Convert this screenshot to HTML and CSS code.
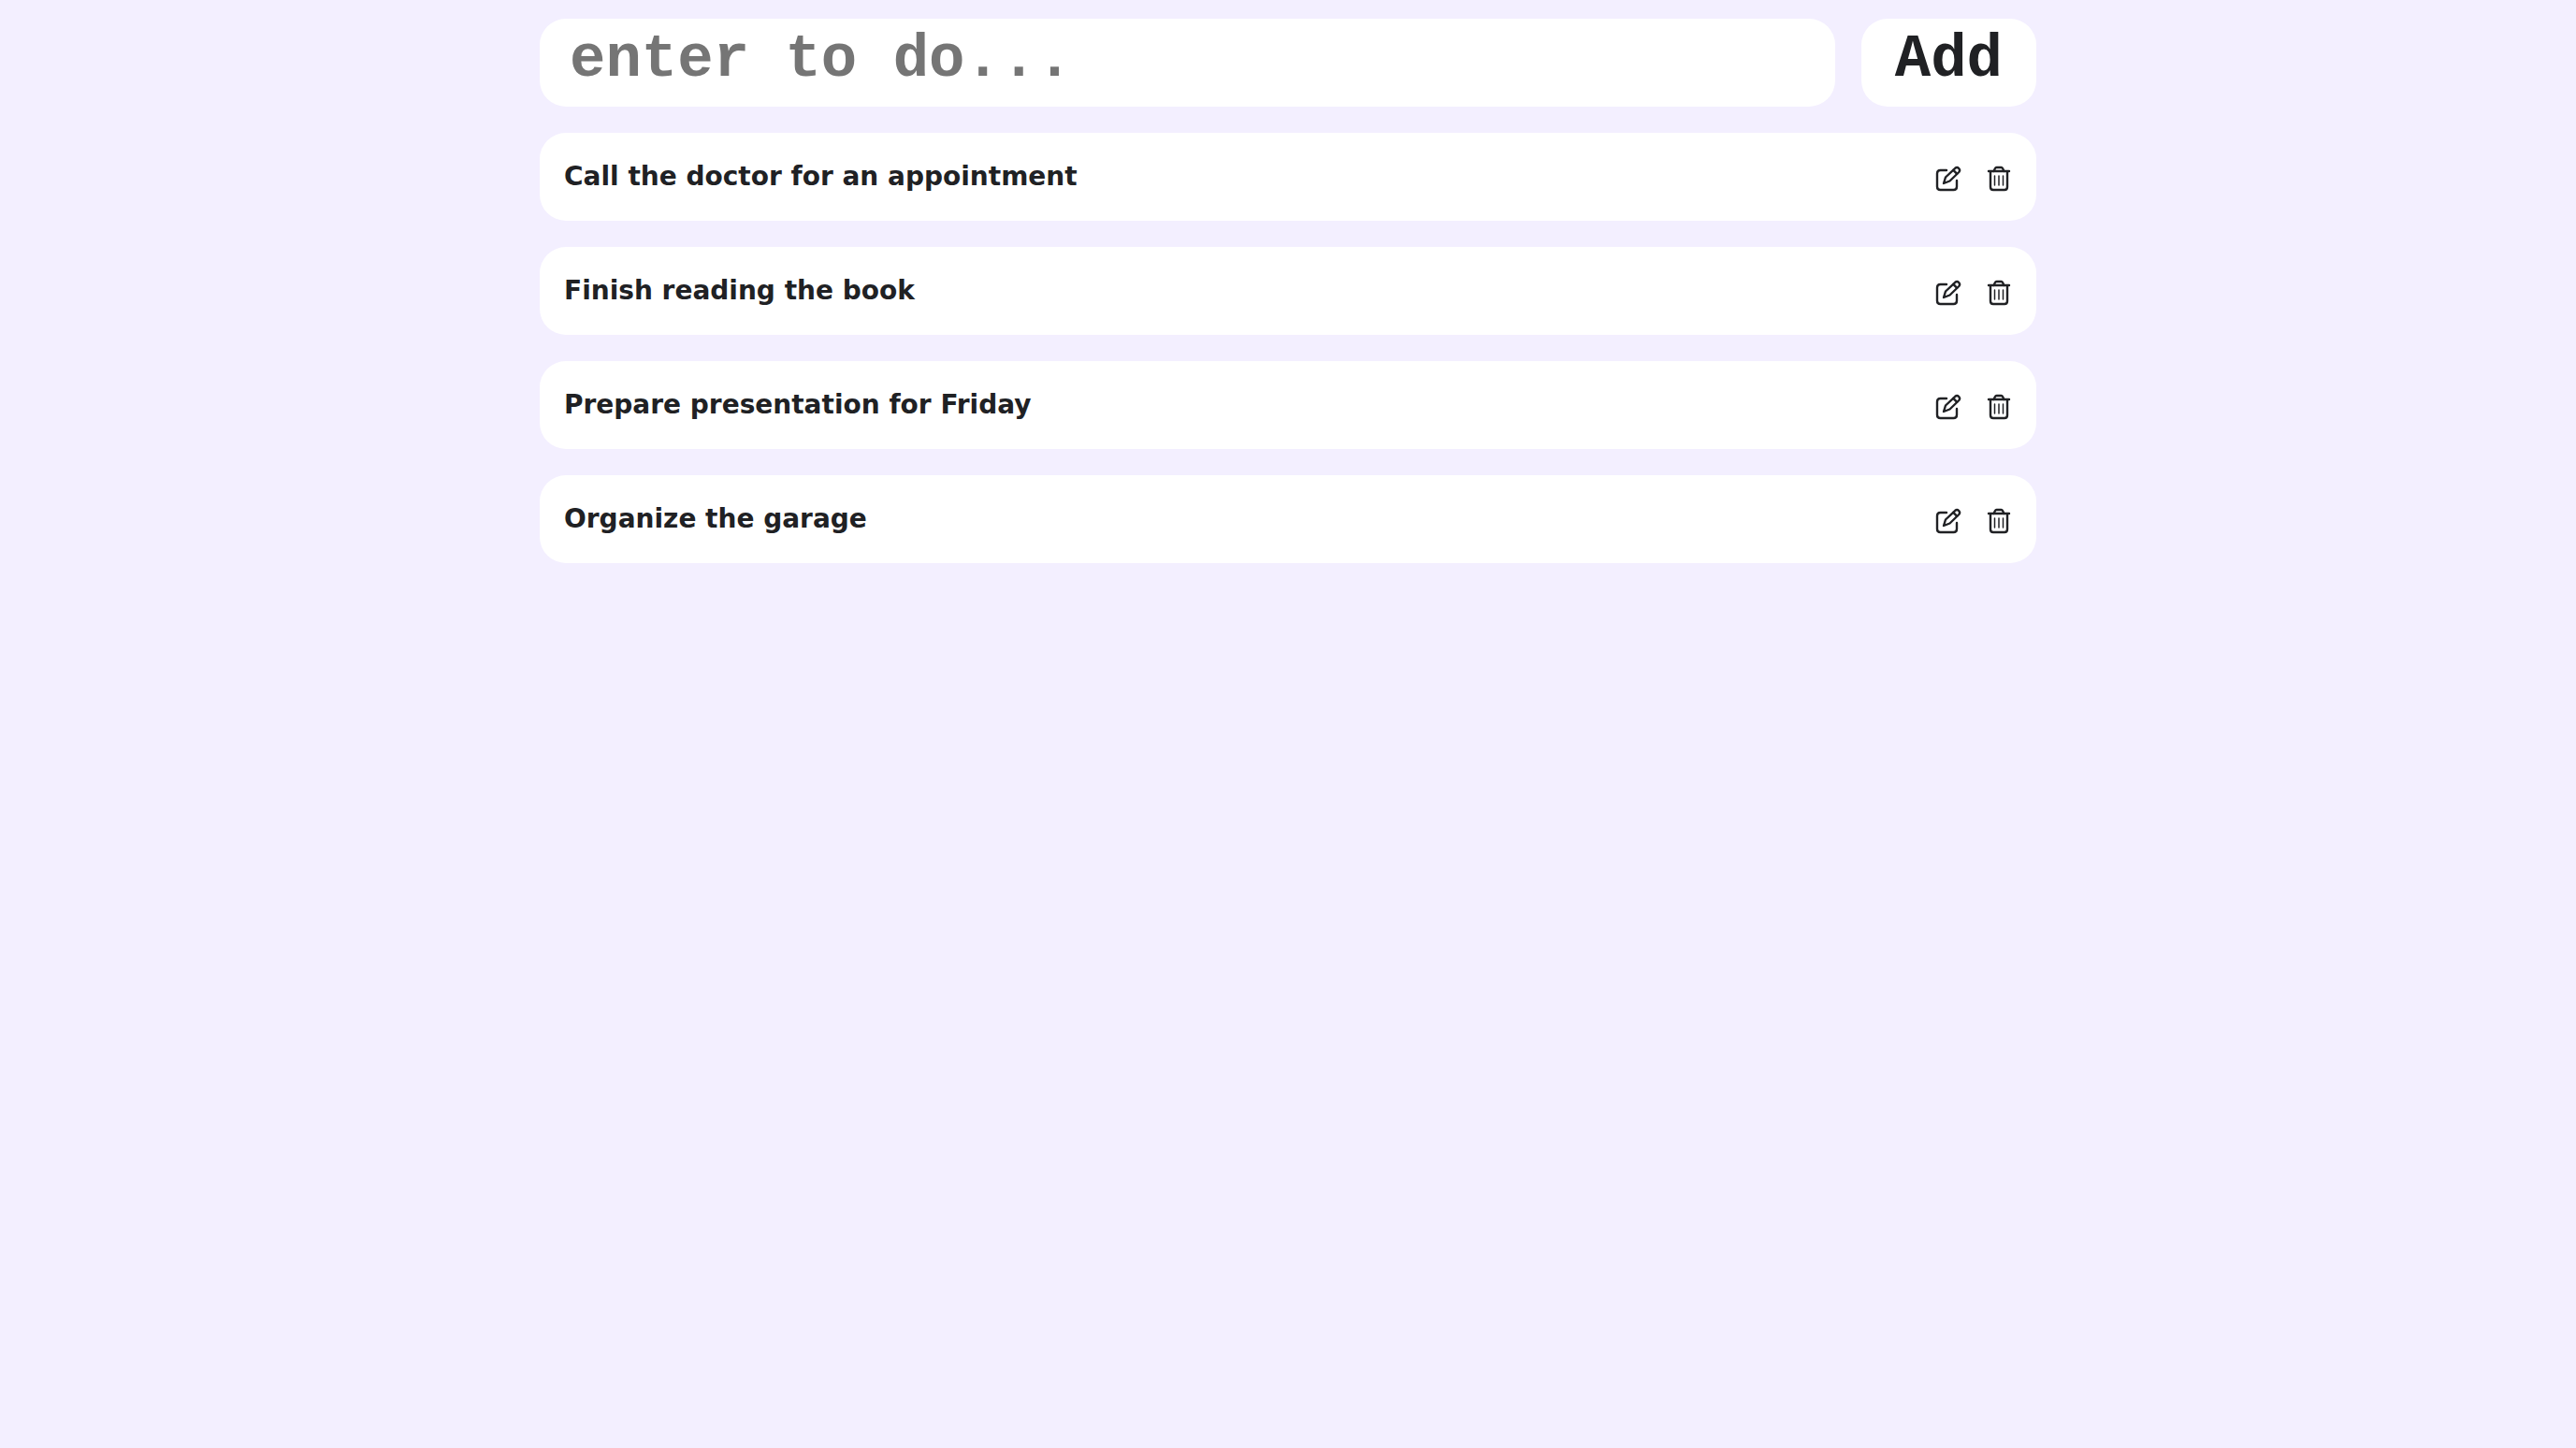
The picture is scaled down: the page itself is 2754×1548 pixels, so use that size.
FILE: index.html
```
<!DOCTYPE html>
<html lang="en">
<head>
<meta charset="utf-8">
<meta name="viewport" content="width=device-width, initial-scale=1">
<title>To do</title>
<link rel="stylesheet" href="styles.css">
</head>
<body>
<svg class="sprite" aria-hidden="true">
  <symbol id="edit" viewBox="0 0 28 28">
    <path d="M12 5H5.500Q2 5 2 8.500V22.500Q2 26 5.500 26H19.500Q23 26 23 22.500V16"/>
    <path d="M9 19L11 12.500L21.300 2.800Q23.300 1.200 25.200 3.100Q27 5 25.300 7L15.500 16.500Z"/>
    <path d="M19.300 4.800L23.200 8.800"/>
  </symbol>
  <symbol id="trash" viewBox="0 0 28 28">
    <path d="M3 6H25M5 6V23Q5 26 8 26H20Q23 26 23 23V6"/>
    <path d="M8.500 6L10 3Q10.500 2 11.500 2H16.500Q17.500 2 18 3L19.500 6"/>
    <path class="thin" d="M9.500 11V21M14 11V21M18.500 11V21"/>
  </symbol>
</svg>
<main class="app">
  <form class="entry">
    <input class="entry-input" type="text" aria-label="New to do" placeholder="enter to do...">
    <button class="entry-add" type="button">Add</button>
  </form>
  <ul class="list">
    <li class="item">
      <span class="item-text">Call the doctor for an appointment</span>
      <button class="icon-button" type="button" aria-label="Edit"><svg class="icon"><use href="#edit"/></svg></button>
      <button class="icon-button" type="button" aria-label="Delete"><svg class="icon"><use href="#trash"/></svg></button>
    </li>
    <li class="item">
      <span class="item-text">Finish reading the book</span>
      <button class="icon-button" type="button" aria-label="Edit"><svg class="icon"><use href="#edit"/></svg></button>
      <button class="icon-button" type="button" aria-label="Delete"><svg class="icon"><use href="#trash"/></svg></button>
    </li>
    <li class="item">
      <span class="item-text">Prepare presentation for Friday</span>
      <button class="icon-button" type="button" aria-label="Edit"><svg class="icon"><use href="#edit"/></svg></button>
      <button class="icon-button" type="button" aria-label="Delete"><svg class="icon"><use href="#trash"/></svg></button>
    </li>
    <li class="item">
      <span class="item-text">Organize the garage</span>
      <button class="icon-button" type="button" aria-label="Edit"><svg class="icon"><use href="#edit"/></svg></button>
      <button class="icon-button" type="button" aria-label="Delete"><svg class="icon"><use href="#trash"/></svg></button>
    </li>
  </ul>
</main>
</body>
</html>
```
FILE: styles.css
```
* {
  box-sizing: border-box;
}

body {
  margin: 0;
  background: #f3efff;
  color: #202124;
  font-family: "DejaVu Sans", sans-serif;
}

.sprite {
  display: none;
}

.app {
  max-width: 1600px;
  margin: 0 auto;
  padding: 20px 0;
  display: flex;
  flex-direction: column;
  gap: 28px;
}

.entry {
  display: flex;
  gap: 28px;
}

.entry-input,
.entry-add {
  border: 0;
  border-radius: 28px;
  background: #fff;
  color: inherit;
  font: bold 64px/80px "Liberation Mono", monospace;
  padding: 4px 36px 10px;
}

.entry-input {
  flex: 1;
  min-width: 0;
  padding-left: 32px;
}

.entry-input::placeholder {
  color: #757575;
  opacity: 1;
}

.list {
  list-style: none;
  margin: 0;
  padding: 0;
  display: flex;
  flex-direction: column;
  gap: 28px;
}

.item {
  display: flex;
  align-items: center;
  gap: 26px;
  min-height: 94px;
  padding: 8px 26px 8px 26px;
  border-radius: 28px;
  background: #fff;
}

.item-text {
  flex: 1;
  font-size: 28px;
  font-weight: bold;
  line-height: 40px;
}

.icon-button {
  display: flex;
  padding: 4px 0 0;
  border: 0;
  background: none;
  color: inherit;
}

.icon {
  width: 28px;
  height: 28px;
  fill: none;
  stroke: currentColor;
  stroke-width: 2.4;
  stroke-linecap: round;
  stroke-linejoin: round;
}

.thin {
  stroke-width: 1.5;
}
```
